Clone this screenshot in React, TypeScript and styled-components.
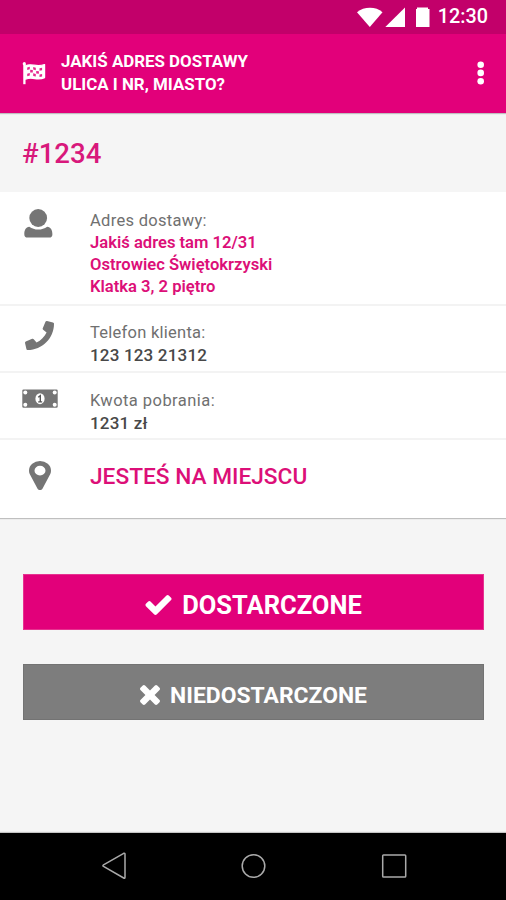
import React from 'react';
import styled, { createGlobalStyle } from 'styled-components';

const pink = '#e2007a';
const gray = '#757575';

const GlobalStyle = createGlobalStyle`
  *, *::before, *::after { box-sizing: border-box; }
  body { margin: 0; background: #f5f5f5; font-family: Roboto, "Liberation Sans", sans-serif; }
  svg { display: block; flex: none; }
`;

const Screen = styled.div`
  display: flex;
  flex-direction: column;
  width: 506px;
  height: 900px;
  background: #f5f5f5;
  overflow: hidden;
`;

const StatusBar = styled.div`
  display: flex;
  align-items: center;
  justify-content: flex-end;
  height: 34px;
  padding-right: 18px;
  background: #c2006a;
  color: #fff;
`;

const Clock = styled.time`
  margin-left: 7px;
  font-size: 19.8px;
  font-weight: 500;
  line-height: 34px;
`;

const AppBar = styled.header`
  display: flex;
  align-items: flex-start;
  height: 79px;
  padding: 0 21px 0 22px;
  background: ${pink};
  color: #fff;
  box-shadow: 0 1px 1px rgba(0, 0, 0, 0.22);
  z-index: 1;
`;

const FlagSlot = styled.span`
  width: 39px;
  padding-top: 27px;
`;

const Title = styled.h1`
  flex: 1;
  margin: 0;
  padding-top: 16px;
  font-size: 16.9px;
  font-weight: 700;
  line-height: 22.6px;
  white-space: pre-line;
`;

const MenuButton = styled.button`
  margin: 27px 0 0;
  padding: 0;
  border: 0;
  background: none;
  color: inherit;
`;

const OrderNumber = styled.h2`
  height: 79px;
  margin: 0;
  padding-left: 22px;
  color: #d8187b;
  font-size: 27.6px;
  font-weight: 500;
  line-height: 81px;
`;

const Details = styled.section`
  display: flex;
  flex-direction: column;
  background: #fff;
  box-shadow: 0 1px 1px rgba(0, 0, 0, 0.22);
`;

const Row = styled.div<{ $height: number; $top: number }>`
  display: flex;
  height: ${(p) => p.$height}px;
  padding-top: ${(p) => p.$top}px;
  border-bottom: 2px solid #f3f3f3;

  &:last-child { border-bottom: 0; }
`;

const RowIcon = styled.span<{ $left: number }>`
  flex: none;
  width: 90px;
  padding-left: ${(p) => p.$left}px;
  color: ${gray};
`;

const RowText = styled.div`
  font-size: 17px;
  line-height: 22.5px;
`;

const Label = styled.div<{ $spacing: number }>`
  padding-top: 1px;
  margin-bottom: -1px;
  color: #707070;
  font-size: 16.5px;
  letter-spacing: ${(p) => p.$spacing}px;
`;

const Value = styled.div<{ $accent?: boolean }>`
  color: ${(p) => (p.$accent ? '#dc0f78' : '#484848')};
  font-size: ${(p) => (p.$accent ? 16.6 : 17)}px;
  font-weight: ${(p) => (p.$accent ? 600 : 500)};
  letter-spacing: ${(p) => (p.$accent ? 0 : 0.18)}px;
  line-height: ${(p) => (p.$accent ? 22.3 : 22.5)}px;
  white-space: pre-line;
`;

const Arrived = styled.div`
  padding-top: 1px;
  color: #dc0f78;
  font-size: 22.7px;
  font-weight: 500;
  line-height: 30px;
`;

const Actions = styled.main`
  display: flex;
  flex: 1;
  flex-direction: column;
  gap: 34px;
  padding: 56px 22px 0 23px;
`;

const Action = styled.button<{ $primary?: boolean }>`
  display: flex;
  align-items: center;
  justify-content: center;
  gap: 10px;
  height: 56px;
  padding: ${(p) => (p.$primary ? 5 : 6)}px 0 0;
  border: 1px solid ${(p) => (p.$primary ? '#e63390' : '#737373')};
  background: ${(p) => (p.$primary ? pink : '#7d7d7d')};
  color: #fff;
  font-family: inherit;
  font-size: ${(p) => (p.$primary ? 25.5 : 22.9)}px;
  font-weight: 700;
`;

const NavBar = styled.nav`
  display: flex;
  align-items: center;
  justify-content: space-between;
  height: 67px;
  padding: 0 99px 1px 101px;
  background: #000;
  box-shadow: 0 -1px 1px rgba(0, 0, 0, 0.2);
`;

const StatusIcons = () => (
  <svg width="76" height="34" viewBox="354 0 76 34" fill="currentColor">
    <path d="M356 12.2C363 6.3 375 6.3 381.5 12.2L368.8 27Z" />
    <path d="M404 7.5V27H384.3Z" />
    <path d="M416 9V7.5h11V9h1.5v18H415V9Z" />
  </svg>
);

const FlagIcon = () => (
  <svg width="25" height="24" viewBox="22 61 25 24">
    <circle cx="24.3" cy="63.7" r="1.6" fill="#fff" />
    <path d="M24.4 64V84.2" stroke="#fff" strokeWidth="2.3" />
    <path
      d="M25.5 65.8C32 62.5 35.5 67.8 44.6 64.5V77.6C37 81.2 33 76.1 25.5 79.2Z"
      fill="#fff"
      stroke="#fff"
      strokeWidth="1.2"
      strokeLinejoin="round"
    />
    <g fill={pink} fillOpacity=".85">
      <path d="M27.2 67.4l2.6-.7v2.6l-2.6.7zM33.2 67l2.6.7v2.6l-2.6-.7zM39.5 68.2l2.6-.5v2.6l-2.6.5z" />
      <path d="M30.2 69.8l2.6.2v2.6l-2.6-.2zM36.2 71l2.7.2v2.6l-2.7-.2z" />
      <path d="M27.2 73.7l2.6-.7v2.6l-2.6.6zM33.2 73.2l2.6.8v2.6l-2.6-.7zM39.5 74.5l2.6-.6v2.6l-2.6.5z" />
    </g>
  </svg>
);

const DotsIcon = () => (
  <svg width="8" height="26" viewBox="0 0 8 26" fill="currentColor">
    <circle cx="3.7" cy="3.7" r="3.3" />
    <circle cx="3.7" cy="11.9" r="3.3" />
    <circle cx="3.7" cy="20.3" r="3.3" />
  </svg>
);

const UserIcon = () => (
  <svg width="29" height="30" viewBox="0 0 29 30" fill="currentColor">
    <circle cx="14.2" cy="9" r="8.9" />
    <path d="M5.3 17.8C8 19.7 10.8 20.6 14.2 20.6S20.6 19.7 23.2 17.8C26.8 18.2 28.4 21.2 28.4 25.2Q28.4 28.6 25.2 28.6H3.6Q.3 28.6.3 25.2C.3 21.2 1.8 18.2 5.3 17.8Z" />
  </svg>
);

const PhoneIcon = () => (
  <svg width="29" height="29" viewBox="0 0 512 512" fill="currentColor">
    <path d="M493 24.6l-104-24c-11.3-2.6-22.9 3.3-27.5 13.9l-48 112c-4.2 9.8-1.4 21.3 6.9 28l60.6 49.6c-36 76.7-98.9 140.5-177.2 177.2l-49.6-60.6c-6.8-8.3-18.2-11.1-28-6.9l-112 48C3.9 366.5-2 378.1.6 389.4l24 104C27.1 504.2 36.7 512 48 512c256.1 0 464-207.5 464-464 0-11.2-7.7-20.9-19-23.4z" />
  </svg>
);

const MoneyIcon = () => (
  <svg width="36" height="20" viewBox="0 0 36 20">
    <rect x=".3" y=".6" width="35.4" height="18.2" rx="1.2" fill={gray} />
    <g fill="#fff">
      <circle cx="3.3" cy="3.6" r="2" />
      <circle cx="32.7" cy="3.6" r="2" />
      <circle cx="3.3" cy="15.8" r="2" />
      <circle cx="32.7" cy="15.8" r="2" />
    </g>
    <ellipse cx="18" cy="9.7" rx="4.6" ry="5.5" fill="#fff" />
    <path d="M16.2 8.2L18.3 6.7V12.6M16.2 12.9H20.2" fill="none" stroke="#555" strokeWidth="1.4" />
  </svg>
);

const PinIcon = () => (
  <svg width="22" height="29" viewBox="384 128 1024 1536" preserveAspectRatio="none" fill="currentColor">
    <path d="M1152 640q0-106-75-181t-181-75-181 75-75 181 75 181 181 75 181-75 75-181zm256 0q0 109-33 179l-364 774q-16 33-47.5 52t-67.5 19-67.5-19-46.5-52l-365-774q-33-70-33-179 0-212 150-362t362-150 362 150 150 362z" />
  </svg>
);

const CheckIcon = () => (
  <svg width="27" height="20" viewBox="121 334 1550 1188" fill="currentColor">
    <path d="M1671 566q0 40-28 68l-724 724-136 136q-28 28-68 28t-68-28l-136-136-362-362q-28-28-28-68t28-68l136-136q28-28 68-28t68 28l294 295 656-657q28-28 68-28t68 28l136 136q28 28 28 68z" />
  </svg>
);

const CrossIcon = () => (
  <svg width="20" height="20" viewBox="302 366 1188 1188" fill="currentColor">
    <path d="M1490 1322q0 40-28 68l-136 136q-28 28-68 28t-68-28l-294-294-294 294q-28 28-68 28t-68-28l-136-136q-28-28-28-68t28-68l294-294-294-294q-28-28-28-68t28-68l136-136q28-28 68-28t68 28l294 294 294-294q28-28 68-28t68 28l136 136q28 28 28 68t-28 68l-294 294 294 294q28 28 28 68z" />
  </svg>
);

const navStroke = { fill: 'none', stroke: '#aaa', strokeWidth: 1.5, strokeLinejoin: 'round' as const };

const BackIcon = () => (
  <svg width="26" height="28" viewBox="0 0 26 28" {...navStroke}>
    <path d="M22.7 1.3Q24 .8 24 2.2V25.3Q24 26.8 22.7 26L2.5 14.4Q1.3 13.6 2.5 12.9Z" />
  </svg>
);

const HomeIcon = () => (
  <svg width="26" height="26" viewBox="0 0 26 26" {...navStroke}>
    <circle cx="12.5" cy="13" r="11.3" />
  </svg>
);

const RecentIcon = () => (
  <svg width="26" height="26" viewBox="0 0 26 26" {...navStroke}>
    <rect x="1.7" y="2" width="23" height="22" rx=".8" />
  </svg>
);

export default function App() {
  return (
    <Screen>
      <GlobalStyle />
      <StatusBar>
        <StatusIcons />
        <Clock>12:30</Clock>
      </StatusBar>
      <AppBar>
        <FlagSlot>
          <FlagIcon />
        </FlagSlot>
        <Title>{'JAKIŚ ADRES DOSTAWY\nULICA I NR, MIASTO?'}</Title>
        <MenuButton aria-label="Menu">
          <DotsIcon />
        </MenuButton>
      </AppBar>
      <OrderNumber>#1234</OrderNumber>
      <Details>
        <Row $height={114} $top={17}>
          <RowIcon $left={24}>
            <UserIcon />
          </RowIcon>
          <RowText>
            <Label $spacing={0.3}>Adres dostawy:</Label>
            <Value $accent>{'Jakiś adres tam 12/31\nOstrowiec Świętokrzyski\nKlatka 3, 2 piętro'}</Value>
          </RowText>
        </Row>
        <Row $height={67} $top={15}>
          <RowIcon $left={25}>
            <PhoneIcon />
          </RowIcon>
          <RowText>
            <Label $spacing={0.25}>Telefon klienta:</Label>
            <Value>123 123 21312</Value>
          </RowText>
        </Row>
        <Row $height={67} $top={16}>
          <RowIcon $left={22}>
            <MoneyIcon />
          </RowIcon>
          <RowText>
            <Label $spacing={0.45}>Kwota pobrania:</Label>
            <Value>1231 zł</Value>
          </RowText>
        </Row>
        <Row $height={78} $top={21}>
          <RowIcon $left={29}>
            <PinIcon />
          </RowIcon>
          <Arrived>JESTEŚ NA MIEJSCU</Arrived>
        </Row>
      </Details>
      <Actions>
        <Action $primary>
          <CheckIcon />
          DOSTARCZONE
        </Action>
        <Action>
          <CrossIcon />
          NIEDOSTARCZONE
        </Action>
      </Actions>
      <NavBar>
        <BackIcon />
        <HomeIcon />
        <RecentIcon />
      </NavBar>
    </Screen>
  );
}
